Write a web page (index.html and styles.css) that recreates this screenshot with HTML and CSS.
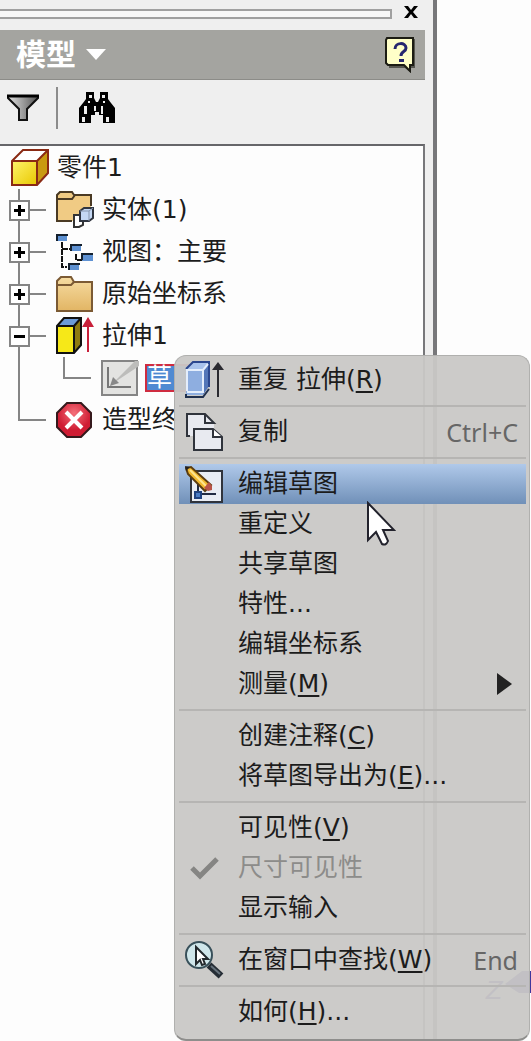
FILE: index.html
```html
<!DOCTYPE html>
<html lang="zh-CN">

<head>
    <meta charset="UTF-8">
    <meta name="viewport" content="width=device-width, initial-scale=1.0">
    <title>模型</title>
    <link rel="stylesheet" href="styles.css">
</head>

<body>
    <div class="panel">
        <div class="grip">
            <div class="grip-bar"></div>
            <button class="close" aria-label="关闭">
                <svg width="16" height="14" viewBox="0 0 16 14"><path d="M1 1h4l3 4 3-4h4l-5 6 5 6h-4l-3-4-3 4H1l5-6z" fill="#000"/></svg>
            </button>
        </div>
        <div class="title-bar">
            <button class="title">模型
                <svg width="20" height="12" viewBox="0 0 20 12"><path d="M0 0h20L10 11z" fill="#fff"/></svg>
            </button>
            <button class="help" aria-label="帮助">
                <svg width="32" height="36" viewBox="0 0 32 36">
                    <path d="M4 2h26v29h-4l-1 4-5-4H4z" fill="#55554f"/>
                    <path d="M2 1h26v27h-3v6l-6-6H3l-2-2V3z" fill="#ffffc8" stroke="#1c1c14" stroke-width="2"/>
                    <path d="M10 12c0-7 11-7 11-1 0 4-5 3-5 8" fill="none" stroke="#26266e" stroke-width="3"/>
                    <path d="M14 22h5v3h-5z" fill="#26266e"/>
                </svg>
            </button>
        </div>
        <div class="toolbar">
            <button aria-label="过滤器">
                <svg width="34" height="28" viewBox="0 0 34 28">
                    <defs><linearGradient id="funnel"><stop offset="0" stop-color="#e2e2e2"/><stop offset="1" stop-color="#555"/></linearGradient></defs>
                    <path d="M2 2h30v2L21 15v11h-8V15L2 4z" fill="url(#funnel)" stroke="#111" stroke-width="2"/>
                    <path d="M1 2h32" stroke="#000" stroke-width="3"/>
                </svg>
            </button>
            <span class="divider"></span>
            <button aria-label="查找">
                <svg width="36" height="32" viewBox="0 0 36 32">
                    <path d="M7 0h8v6l2 4h2l2-4V0h8v7l3 4 4 5v15H24v-8h-4v-3h-4v3h-4v8H0V16l4-5 3-4z" fill="#000"/>
                    <path d="M10 3h3v3h-3zM23 3h3v3h-3zM5 14h3v8H5zM15 14h2v5h-2zM22 14h2v8h-2zM3 25h3v5H3zM27 25h3v5h-3zM9 9h2v2H9zM24 9h2v2h-2z" fill="#eee"/>
                </svg>
            </button>
        </div>
        <ul class="tree">
            <li class="row root">
                <svg width="38" height="38" viewBox="0 0 38 38">
                    <defs><linearGradient id="gold" x2="1" y2="1"><stop offset="0" stop-color="#fff36a"/><stop offset="1" stop-color="#e8c800"/></linearGradient></defs>
                    <path d="M1 12 12 1h25L26 12z" fill="#fff"/>
                    <path d="M26 12 37 1v23L26 36z" fill="#c99a10"/>
                    <path d="M1 12h25v24H1z" fill="url(#gold)"/>
                    <path d="M1 12 12 1h25v23L26 36H1zh25v24M26 12 37 1" fill="none" stroke="#8a2a14" stroke-width="2"/>
                </svg>
                <span>零件1</span>
            </li>
            <li class="row">
                <span class="branch"><button class="toggle plus" aria-label="展开"></button></span>
                <svg width="38" height="38" viewBox="0 0 38 38">
                    <path d="M1 30V4l3-3h11l3 4h17v25z" fill="#f0cb84"/>
                    <path d="M35 15V4H18l-2-3H4L1 4v26h15M1 8h15l3-4" fill="none" stroke="#4a3a24" stroke-width="2"/>
                    <path d="M18 24h9v10l-4 2h-5z" fill="#fff" stroke="#333" stroke-width="2"/>
                    <path d="m24 20 4-3h9v10l-4 3h-9z" fill="#c5d8f4" stroke="#2f3540" stroke-width="2"/>
                    <path d="M24 20h9v10M33 20l4-3" fill="none" stroke="#8796ad"/>
                </svg>
                <span>实体(1)</span>
            </li>
            <li class="row">
                <span class="branch"><button class="toggle plus" aria-label="展开"></button></span>
                <svg width="38" height="38" viewBox="0 0 38 38">
                    <path d="M6 9v25h5M6 16h8M20 21v6h6" fill="none" stroke="#111" stroke-width="2" stroke-dasharray="6 1"/>
                    <path d="M1 3h10v5H1zM15 12h10v6H15zM26 22h11v6H26zM13 31h10v6H13z" fill="#5e91d2"/>
                    <path d="M1 8V2h11M15 18v-6h11M26 27v-6h11M13 37v-6h11" fill="none" stroke="#14202e" stroke-width="2"/>
                </svg>
                <span>视图：主要</span>
            </li>
            <li class="row">
                <span class="branch"><button class="toggle plus" aria-label="展开"></button></span>
                <svg width="38" height="38" viewBox="0 0 38 38">
                    <defs><linearGradient id="tan" x2="0" y2="1"><stop offset="0" stop-color="#f6dca2"/><stop offset="1" stop-color="#e2b564"/></linearGradient></defs>
                    <path d="M1 36V6l4-4h10l3 5h18v29z" fill="url(#tan)" stroke="#7b5a34" stroke-width="2"/>
                    <path d="M2 10h13l3-3" fill="none" stroke="#7b5a34" stroke-width="2"/>
                </svg>
                <span>原始坐标系</span>
            </li>
            <li class="row">
                <span class="branch"><button class="toggle minus" aria-label="折叠"></button></span>
                <svg width="38" height="38" viewBox="0 0 38 38">
                    <path d="M1 9 8 1h17l-7 8z" fill="#6c9bd8"/>
                    <path d="M18 9l7-8v27l-7 8z" fill="#8e7a10"/>
                    <path d="M1 9h17v27H1z" fill="#f6e818"/>
                    <path d="M1 9 8 1h17v27l-7 8H1zh17v27M18 9l7-8" fill="none" stroke="#111" stroke-width="2"/>
                    <path d="M32 35V8" stroke="#c8203a" stroke-width="2"/>
                    <path d="m32 0 6 10H26z" fill="#c8203a"/>
                </svg>
                <span>拉伸1</span>
            </li>
            <li class="row child">
                <span class="branch"></span>
                <svg width="38" height="36" viewBox="0 0 38 36">
                    <path d="M1 1h35v34H1z" fill="#e3e3e1" stroke="#858585" stroke-width="2"/>
                    <path d="M7 7v20h23" fill="none" stroke="#777" stroke-width="2"/>
                    <path d="M10 25 34 1h4v5L14 22z" fill="#bdbdbb"/>
                    <path d="m9 26 3-9 6 6z" fill="#888"/>
                </svg>
                <span class="selected">草</span>
            </li>
            <li class="row last">
                <span class="branch"></span>
                <svg width="38" height="38" viewBox="0 0 38 38">
                    <defs><radialGradient id="stop" cy=".3"><stop offset="0" stop-color="#f4707a"/><stop offset="1" stop-color="#cf1c33"/></radialGradient></defs>
                    <path d="M11 2h14l10 10v14L25 36H11L1 26V12z" fill="url(#stop)" stroke="#35191c" stroke-width="2"/>
                    <path d="m10 11 16 16M26 11 10 27" stroke="#fff" stroke-width="4"/>
                </svg>
                <span>造型终</span>
            </li>
        </ul>
    </div>

    <div class="axis">
        <span>Z</span>
        <svg width="26" height="24" viewBox="0 0 26 24"><path d="M0 13 17 0h9v22H14z" fill="#40369c"/></svg>
    </div>

    <div class="menu">
        <ul>
            <li><button>
                <span class="icon"><svg width="40" height="38" viewBox="0 0 40 38">
                    <path d="M1 8 8 1h16l-6 7z" fill="#a9c3ec"/>
                    <path d="M18 8l6-7v24l-6 9z" fill="#5376b8"/>
                    <path d="M1 8h17v26H1z" fill="#8eaee0"/>
                    <path d="M1 8 8 1h16v25" fill="none" stroke="#2b478e" stroke-width="2"/>
                    <path d="M2 30V9h16v22H2M18 9l5-6" fill="none" stroke="#e4eefc" stroke-width="2"/>
                    <path d="M1 33v3h17l6-8" fill="none" stroke="#20304e" stroke-width="2"/>
                    <path d="M33 36V7" stroke="#2a2a30" stroke-width="2"/>
                    <path d="m33 1 6 8H27z" fill="#2a2a30"/>
                </svg></span>
                <span>重复 拉伸(<u>R</u>)</span>
            </button></li>
            <li class="line"></li>
            <li><button>
                <span class="icon"><svg width="40" height="38" viewBox="0 0 40 38">
                    <path d="M2 1h18l9 9v13H2z" fill="#e8eaf0"/>
                    <path d="M5 23H2V1h18l9 9H20V1" fill="none" stroke="#30343c" stroke-width="2"/>
                    <path d="M9 16h19l9 8v13H9z" fill="#e8eaf0" stroke="#30343c" stroke-width="2"/>
                    <path d="M28 16v8h9" fill="#fff" stroke="#30343c" stroke-width="2"/>
                </svg></span>
                <span>复制</span>
                <kbd>Ctrl+C</kbd>
            </button></li>
            <li class="line"></li>
            <li><button class="active">
                <span class="icon"><svg width="40" height="38" viewBox="0 0 40 38">
                    <path d="M6 6h31v31H6z" fill="#e9edf4" stroke="#30343c" stroke-width="2"/>
                    <path d="M13 14v15h18" fill="none" stroke="#222c44" stroke-width="2"/>
                    <path d="M10 27h6v6h-6z" fill="#4a7cc4" stroke="#1f4280" stroke-width="2"/>
                    <path d="m1 3 5-1 20 18-6 6L3 9z" fill="#f2b92e" stroke="#5c3d10" stroke-width="2"/>
                    <path d="m5 5 17 17" stroke="#ffe590" stroke-width="2"/>
                    <path d="m19 23 5-6 3 4v4l-4 1z" fill="#b95347"/>
                    <path d="m0 1 5 1-4 4z" fill="#222"/>
                </svg></span>
                <span>编辑草图</span>
            </button></li>
            <li><button><span class="icon"></span><span>重定义</span></button></li>
            <li><button><span class="icon"></span><span>共享草图</span></button></li>
            <li><button><span class="icon"></span><span>特性...</span></button></li>
            <li><button><span class="icon"></span><span>编辑坐标系</span></button></li>
            <li><button>
                <span class="icon"></span>
                <span>测量(<u>M</u>)</span>
                <svg class="more" width="15" height="22" viewBox="0 0 15 22"><path d="M0 0v22l15-11z" fill="#222"/></svg>
            </button></li>
            <li class="line"></li>
            <li><button><span class="icon"></span><span>创建注释(<u>C</u>)</span></button></li>
            <li><button><span class="icon"></span><span>将草图导出为(<u>E</u>)...</span></button></li>
            <li class="line"></li>
            <li><button><span class="icon"></span><span>可见性(<u>V</u>)</span></button></li>
            <li><button disabled>
                <span class="icon"><svg width="40" height="24" viewBox="0 0 40 24"><path d="m7 12 8 8L32 3" fill="none" stroke="#858583" stroke-width="5"/></svg></span>
                <span>尺寸可见性</span>
            </button></li>
            <li><button><span class="icon"></span><span>显示输入</span></button></li>
            <li class="line"></li>
            <li><button>
                <span class="icon"><svg width="40" height="38" viewBox="0 0 40 38">
                    <path d="m24 24 12 11" stroke="#252d35" stroke-width="7"/>
                    <path d="m26 25 9 8" stroke="#66727c" stroke-width="2"/>
                    <circle cx="14" cy="14" r="13" fill="#cfe6ea" stroke="#38505a" stroke-width="2"/>
                    <path d="M11 6v17l4-4 2 5 3-1-2-5h5z" fill="#fff" stroke="#22282c" stroke-width="2"/>
                </svg></span>
                <span>在窗口中查找(<u>W</u>)</span>
                <kbd>End</kbd>
            </button></li>
            <li class="line"></li>
            <li><button><span class="icon"></span><span>如何(<u>H</u>)...</span></button></li>
        </ul>
        <svg class="cursor" width="30" height="46" viewBox="0 0 30 46">
            <path d="M2 2v37l8-8 6 12q4 2 6-3l-5-11h11z" fill="#fff" stroke="#22222c" stroke-width="2"/>
        </svg>
    </div>
</body>

</html>
```
FILE: styles.css
```css
* {
    margin: 0;
    padding: 0;
    box-sizing: border-box;
}

body {
    position: relative;
    min-height: 100vh;
    background: #fdfdfd;
    color: #1c1c1c;
    font-family: "DejaVu Sans", "Noto Sans CJK SC", sans-serif;
    font-size: 25px;
    line-height: 40px;
    overflow: hidden;
}

ul {
    list-style: none;
}

svg {
    display: block;
    flex: none;
}

button {
    border: none;
    background: none;
    color: inherit;
    font: inherit;
}

/* browser panel */
.panel {
    display: flex;
    flex-direction: column;
    min-height: 100vh;
    margin-right: 94px;
    padding-right: 8px;
    background: #efefef;
    border-right: 4px solid #77777a;
}

.grip {
    display: flex;
    align-items: center;
    gap: 11px;
    height: 30px;
    padding: 0 6px 6px 0;
}

.grip-bar {
    flex: 1;
    height: 10px;
    margin-top: 4px;
    border: 2px solid #a0a0a0;
    border-left: none;
    background: #f8f8f8;
}

.title-bar {
    display: flex;
    align-items: center;
    justify-content: space-between;
    height: 50px;
    padding: 0 8px 0 16px;
    background: #a4a4a0;
    border-bottom: 1px solid #8c8c88;
}

.title {
    display: flex;
    align-items: center;
    gap: 10px;
    color: #fff;
    font-size: 30px;
    font-weight: bold;
}

.toolbar {
    display: flex;
    align-items: center;
    height: 64px;
    padding: 0 6px 8px;
}

.divider {
    width: 2px;
    height: 42px;
    margin: 0 21px 0 16px;
    background: #8c8c8c;
}

.tree {
    flex: 1;
    padding-top: 1px;
    background: #fdfdfd;
    border-top: 2px solid #66666a;
    border-right: 2px solid #77777a;
}

.row {
    display: flex;
    align-items: center;
    gap: 8px;
    height: 42px;
    white-space: nowrap;
}

.root {
    padding-left: 11px;
}

/* connector lines are painted behind the toggles */
.branch {
    display: flex;
    align-items: center;
    align-self: stretch;
    width: 48px;
    padding-left: 9px;
    background:
        linear-gradient(#858585, #858585) 18px 0 / 2px 100% no-repeat,
        linear-gradient(#858585, #858585) 18px 50% / 28px 2px no-repeat;
}

.last .branch {
    background:
        linear-gradient(#858585, #858585) 18px 0 / 2px 50% no-repeat,
        linear-gradient(#858585, #858585) 18px 50% / 28px 2px no-repeat;
}

.child .branch {
    width: 93px;
    background:
        linear-gradient(#858585, #858585) 18px 0 / 2px 100% no-repeat,
        linear-gradient(#858585, #858585) 63px 0 / 2px 50% no-repeat,
        linear-gradient(#858585, #858585) 63px 50% / 28px 2px no-repeat;
}

.child {
    gap: 6px;
}

.child svg {
    margin-left: 2px;
}

.toggle {
    width: 21px;
    height: 21px;
    border: 2px solid #858585;
}

.plus {
    background:
        linear-gradient(#000, #000) center / 11px 3px no-repeat,
        linear-gradient(#000, #000) center / 3px 11px no-repeat,
        #fff;
}

.minus {
    background: linear-gradient(#000, #000) center / 11px 3px no-repeat, #fff;
}

.selected {
    height: 28px;
    padding-right: 24px;
    border: 2px solid #cf2c40;
    background: #4f8ad2;
    color: #fff;
    line-height: 24px;
}

/* view axis, half hidden by the menu */
.axis {
    position: absolute;
    right: 0;
    bottom: 30px;
    display: flex;
    gap: 2px;
    color: #40369c;
    font-style: italic;
}

/* context menu */
.menu {
    position: absolute;
    top: 355px;
    left: 174px;
    right: 1px;
    padding: 4px 3px 7px 4px;
    background: rgba(201, 200, 198, .95);
    border: 1px solid #b0b0ae;
    border-bottom: 2px solid #8e8e8c;
    border-radius: 12px;
}

.menu button {
    display: flex;
    align-items: center;
    width: 100%;
    height: 40px;
    padding: 0 8px 0 6px;
    text-align: left;
    white-space: nowrap;
}

.menu .active {
    background: linear-gradient(#b0c9ea, #7090b8);
}

.menu button:disabled {
    color: #8c8c8a;
}

.menu u {
    text-decoration-thickness: 2px;
    text-underline-offset: 3px;
}

.icon {
    width: 53px;
}

.line {
    height: 2px;
    margin: 5px 0;
    background: #b6b5b3;
}

.menu kbd {
    margin-left: auto;
    color: #666;
    font-family: "Noto Sans", sans-serif;
}

.more {
    margin: 0 6px 0 auto;
}

.cursor {
    position: absolute;
    top: 145px;
    left: 191px;
}
```
